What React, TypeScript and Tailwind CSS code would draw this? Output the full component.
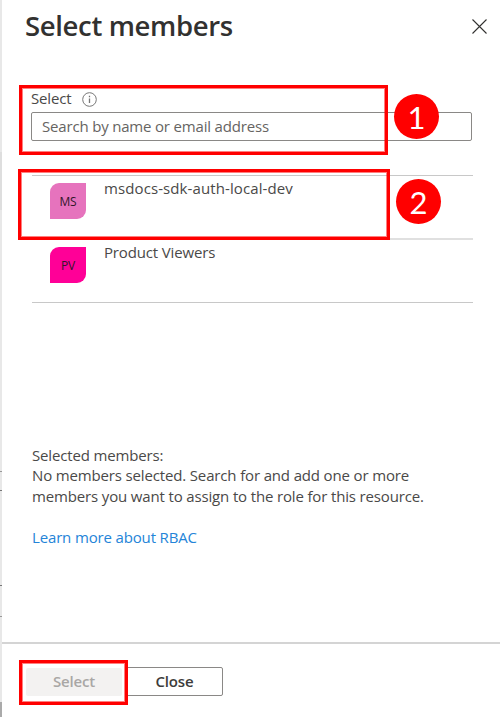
import { ReactNode } from "react";

function Callout({ children, className }: { children: ReactNode; className: string }) {
  return (
    <div
      className={`absolute z-20 flex h-[45px] w-[45px] items-center justify-center rounded-full bg-[#ff0000] pt-px font-['Lato',sans-serif] text-[31px] leading-none text-white ${className}`}
    >
      {children}
    </div>
  );
}

function Outline({ className }: { className: string }) {
  return <div className={`pointer-events-none absolute z-10 border-[3px] border-[#ff0000] shadow-[inset_0_0_0_1px_rgba(255,0,0,0.5)] ${className}`} />;
}

function Member({ initials, name, tone, spacing }: { initials: string; name: string; tone: string; spacing: string }) {
  return (
    <div className="flex h-[62px] pl-[18px] pt-[7px]">
      <div
        className={`flex h-9 w-9 shrink-0 items-center justify-center rounded-tl-[9px] rounded-br-[9px] pt-[2px] text-[12px] text-[#33172a] ${tone}`}
      >
        {initials}
      </div>
      <span className={`ml-[18px] -mt-[5px] h-5 whitespace-nowrap leading-5 ${spacing}`}>{name}</span>
    </div>
  );
}

export default function App() {
  return (
    <div className="flex h-[717px] w-[500px] overflow-hidden bg-white font-['Open_Sans','Noto_Sans',sans-serif] text-[15px] tracking-[-0.15px] text-[#4a4948]">
      <div className="flex w-[2px] shrink-0 flex-col bg-[#e8e8e8]">
        <div className="mt-[152px] h-[58px] bg-[#dedede]" />
        <div className="mt-[261px] h-px bg-[#999]" />
        <div className="mt-[18px] h-px bg-[#777]" />
        <div className="mt-[94px] h-px bg-[#777]" />
        <div className="mt-[30px] h-px bg-[#999]" />
        <div className="mt-[85px] h-[15px] bg-[#aaa]" />
      </div>
      <main className="flex min-w-0 flex-1 flex-col">
        <header className="flex h-[85px] justify-between pl-[23px] pr-[13px]">
          <h1 className="mt-[6px] h-10 whitespace-nowrap text-[27.5px] font-semibold leading-10 tracking-[-0.35px] text-[#323130]">Select members</h1>
          <svg className="mt-[19px] h-[15px] w-[15px]" viewBox="0 0 15 15" fill="none" stroke="#323130" strokeWidth="1.1">
            <path d="M.5.5 14.5 14.5M14.5.5.5 14.5" />
          </svg>
        </header>

        <section className="relative h-[90px] pl-[29px] pr-[28px]">
          <Outline className="left-[17px] top-0 h-[70px] w-[369px]" />
          <div className="flex h-[27px] items-center">
            <label className="-mt-px whitespace-nowrap leading-5">Select</label>
            <svg className="ml-[10px] mt-[1px] h-[15px] w-[15px]" viewBox="0 0 15 15" fill="none" stroke="#777" strokeWidth="1">
              <circle cx="7.5" cy="7.5" r="6.8" />
              <path d="M7.5 6.5v4.6M7.5 3.8v1.4" strokeWidth="1.3" />
            </svg>
          </div>
          <div className="flex h-[29px] items-center rounded-[2px] border border-[#8a8886] pl-[10px] text-[#666462]">
            <span className="whitespace-nowrap tracking-[-0.18px]">Search by name or email address</span>
          </div>
          <Callout className="left-[392px] top-[9px]">1</Callout>
        </section>

        <section className="relative mr-[27px] ml-[30px] h-[264px]">
          <Outline className="-left-[14px] -top-[6px] h-[71px] w-[372px]" />
          <div className="border-t border-[#c8c8c8]">
            <Member initials="MS" name="msdocs-sdk-auth-local-dev" tone="bg-[#e673bd]" spacing="tracking-[0.1px]" />
          </div>
          <div className="border-t-2 border-b border-t-[#e0e0e0] border-b-[#c8c8c8]">
            <Member initials="PV" name="Product Viewers" tone="bg-[#ff0097]" spacing="" />
          </div>
          <Callout className="left-[364px] top-[4px]">2</Callout>
        </section>

        <section className="ml-[30px] flex h-[203px] flex-col items-start pt-[6px] leading-[20.4px]">
          <p className="whitespace-nowrap">Selected members:</p>
          <p className="whitespace-nowrap">No members selected. Search for and add one or more</p>
          <p className="whitespace-nowrap">members you want to assign to the role for this resource.</p>
          <a className="mt-[20.6px] whitespace-nowrap text-[#2484d8]">Learn more about RBAC</a>
        </section>

        <footer className="relative flex flex-1 border-t-2 border-[#d4d4d4] pl-6 pt-[24px]">
          <button className="h-[28px] w-24 rounded-[2px] bg-[#f3f2f1] pb-[2px] font-semibold text-[#a9a7a5]">Select</button>
          <button className="ml-1 -mt-px h-[29px] w-[97px] rounded-[2px] border border-[#8a8886] font-semibold text-[#3d3c3b]">Close</button>
          <Outline className="left-[17px] top-[16px] h-[45px] w-[109px]" />
        </footer>
      </main>
    </div>
  );
}
